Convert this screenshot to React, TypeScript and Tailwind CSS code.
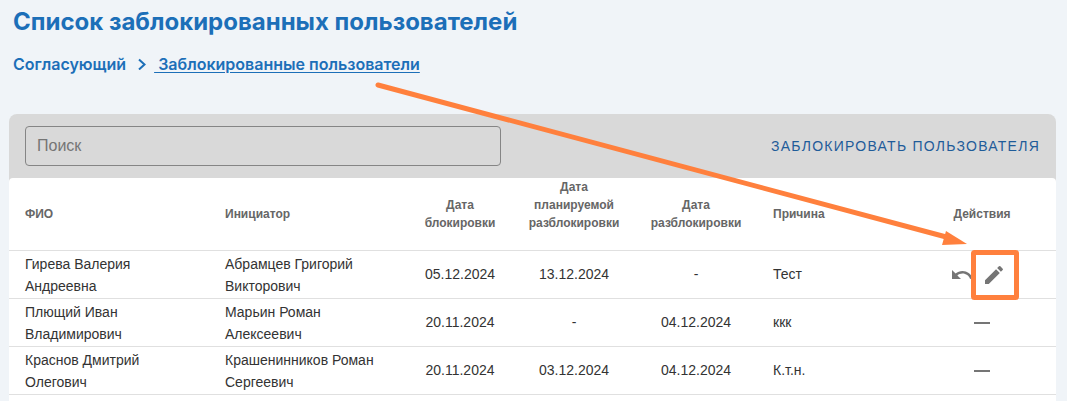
const ROW_GRID = "grid grid-cols-[216px_185px_100px_128px_116px_164px_128px]"

const rows = [
  { name: ["Гирева Валерия", "Андреевна"], by: ["Абрамцев Григорий", "Викторович"], from: "05.12.2024", plan: "13.12.2024", to: "-", why: "Тест", editable: true },
  { name: ["Плющий Иван", "Владимирович"], by: ["Марьин Роман", "Алексеевич"], from: "20.11.2024", plan: "-", to: "04.12.2024", why: "ккк", editable: false },
  { name: ["Краснов Дмитрий", "Олегович"], by: ["Крашенинников Роман", "Сергеевич"], from: "20.11.2024", plan: "03.12.2024", to: "04.12.2024", why: "К.т.н.", editable: false },
]

function Row({ row }: { row: (typeof rows)[number] }) {
  return (
    <div className={`${ROW_GRID} h-[48px] items-center border-b border-[#e0e0e0] text-[14px] leading-[22px] text-[#333333]`}>
      <div className="pl-4">{row.name[0]}<br />{row.name[1]}</div>
      <div>{row.by[0]}<br />{row.by[1]}</div>
      <div className="mb-[2px] text-center">{row.from}</div>
      <div className="mb-[2px] text-center">{row.plan}</div>
      <div className="mb-[2px] text-center">{row.to}</div>
      <div className="mb-[2px] pl-[19px]">{row.why}</div>
      {row.editable ? (
        <div className="flex items-center justify-center pr-2">
          <svg width="24" height="24" viewBox="0 0 24 24" fill="#757575">
            <path d="M12.5 8c-2.65 0-5.05.99-6.9 2.6L2 7v9h9l-3.62-3.62c1.39-1.16 3.16-1.88 5.12-1.88 3.54 0 6.55 2.31 7.6 5.5l2.37-.78C21.08 11.03 17.15 8 12.5 8z" />
          </svg>
          <svg className="ml-2" width="24" height="24" viewBox="0 0 24 24" fill="#757575">
            <path d="M3 17.25V21h3.75L17.81 9.94l-3.75-3.75L3 17.25zM20.71 7.04c.39-.39.39-1.02 0-1.41l-2.34-2.34a.9959.9959 0 0 0-1.41 0l-1.83 1.83 3.75 3.75 1.83-1.83z" />
          </svg>
        </div>
      ) : (
        <div className="flex justify-center">
          <div className="h-[2px] w-4 bg-[#757575]" />
        </div>
      )}
    </div>
  )
}

export default function App() {
  return (
    <div className="relative h-[401px] w-[1067px] overflow-hidden bg-[#f0f4f8] font-['Liberation_Sans',sans-serif]">
      <div className="px-[13px] pt-[6px] font-['Inter',sans-serif] text-[#1c6fb8]">
        <h1 className="text-[24px] leading-[32px] font-bold">Список заблокированных пользователей</h1>
        <div className="mt-[13px] flex items-center text-[16px] leading-[26px] font-semibold">
          <span>Согласующий</span>
          <svg className="ml-[11px]" width="12" height="12" viewBox="0 0 12 12" fill="none" stroke="currentColor" strokeWidth="2">
            <path d="M2 1.5l5.5 5-5.5 5" />
          </svg>
          <span className="ml-[5px] underline underline-offset-2">&nbsp;Заблокированные пользователи</span>
        </div>
      </div>

      <div className="mt-[37px] mr-[11px] ml-[9px] rounded-t-lg bg-[#d9d9d9]">
        <div className="flex h-[64px] items-start justify-between pt-3 pr-4 pl-4">
          <input
            placeholder="Поиск"
            className="h-10 w-[476px] rounded border border-[#858585] bg-transparent px-[11px] text-[16px] outline-none placeholder:text-[#757575]"
          />
          <button className="mt-[11px] text-[14px] leading-[18px] tracking-[1.25px] text-[#1f5c99]">ЗАБЛОКИРОВАТЬ ПОЛЬЗОВАТЕЛЯ</button>
        </div>

        <div className="h-[223px] rounded-t bg-white">
          <div className={`${ROW_GRID} h-[73px] items-center border-b border-[#e0e0e0] text-[12px] leading-[18px] font-bold text-[#666666]`}>
            <div className="pl-4">ФИО</div>
            <div>Инициатор</div>
            <div className="text-center">Дата<br />блокировки</div>
            <div className="mb-[18px] text-center">Дата<br />планируемой<br />разблокировки</div>
            <div className="text-center">Дата<br />разблокировки</div>
            <div className="pl-[19px]">Причина</div>
            <div className="text-center">Действия</div>
          </div>
          {rows.map((row) => (
            <Row key={row.name[0]} row={row} />
          ))}
        </div>
      </div>

      {/* annotation drawn over the screenshot */}
      <svg className="absolute top-0 left-0" width="1067" height="401" fill="none">
        <path d="M378 85L950 238" stroke="#ff803d" strokeWidth="5" strokeLinecap="round" />
        <path d="M946 231L967 244L942 245Z" fill="#ff803d" />
        <rect x="973.5" y="252.5" width="43" height="45" rx="1" stroke="#ff803d" strokeWidth="5" />
      </svg>
    </div>
  )
}
